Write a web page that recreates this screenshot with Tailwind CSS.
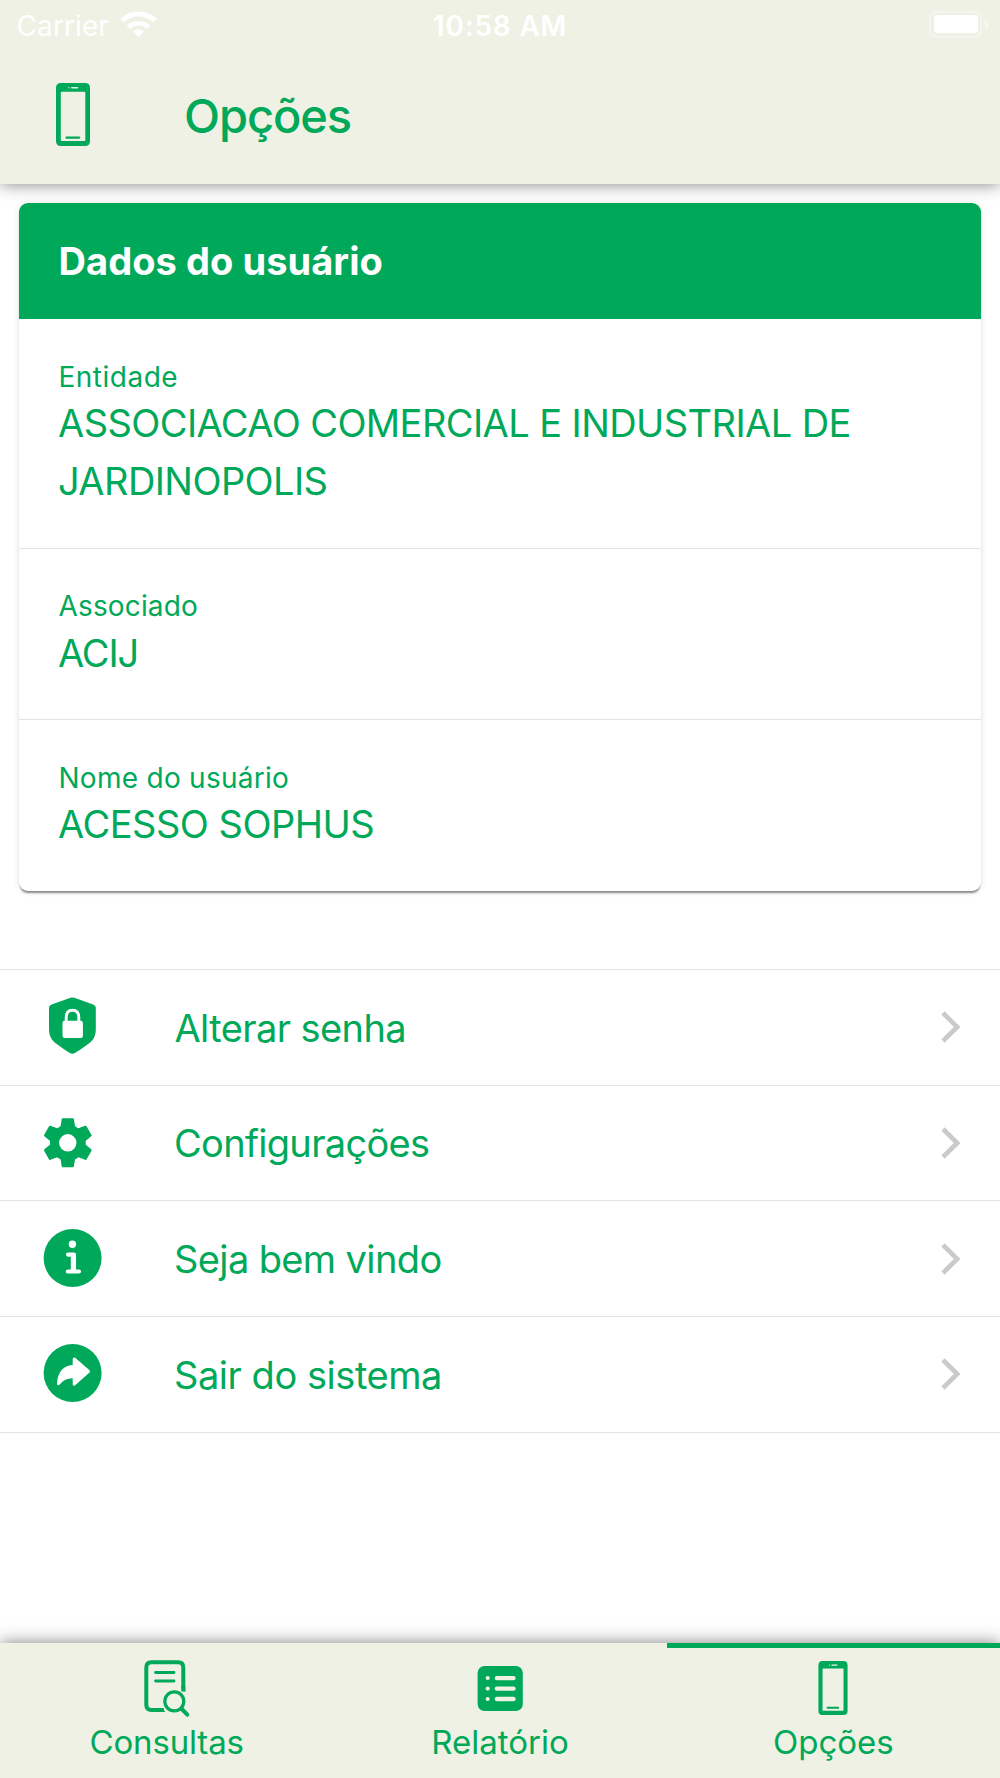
<!DOCTYPE html>
<html lang="pt-BR">
<head>
<meta charset="utf-8">
<title>Opções</title>
<script src="https://cdn.jsdelivr.net/npm/@tailwindcss/browser@4"></script>
</head>
<body class="bg-white font-['Inter',sans-serif] text-[#00a859]">
<svg class="hidden">
  <symbol id="phone" viewBox="0 0 34 63">
    <path fill="currentColor" fill-rule="evenodd" d="M5 0H29Q34 0 34 5V58Q34 63 29 63H5Q0 63 0 58V5Q0 0 5 0ZM5.500 8.700Q4.800 8.700 4.800 9.500V57.200Q4.800 58 5.500 58H28.500Q29.300 58 29.300 57.200V9.500Q29.300 8.700 28.500 8.700Z"/>
    <path stroke="currentColor" stroke-width="2.400" stroke-linecap="round" d="M10.700 54.600H23"/>
    <circle cx="13" cy="4.700" r=".7" fill="#eff1e4"/>
    <path stroke="#eff1e4" stroke-width="1.400" stroke-linecap="round" d="M15.800 4.700H21.500"/>
  </symbol>
  <symbol id="chevron" viewBox="0 0 20 34">
    <path d="M3 3L17.200 17L3 31" fill="none" stroke="#cacaca" stroke-width="4.600"/>
  </symbol>
</svg>
<div class="w-[1000px] h-[1778px] flex flex-col overflow-hidden">
  <header class="h-[183.500px] shrink-0 bg-[#eff1e4] shadow-[0_0_16px_rgba(0,0,0,0.5)] relative z-10">
    <div class="h-[50px] grid grid-cols-3 text-white text-[28px] leading-[52px]">
      <div class="flex pl-[16.500px]">
        <span class="tracking-[0.100px]">Carrier</span>
        <svg class="ml-[9px] mt-[10px]" width="40" height="28" viewBox="118 10 40 28" fill="none" stroke="#fff">
          <path stroke-width="5" d="M122 20.500A24 24 0 0 1 155 20.500"/>
          <path stroke-width="4.600" d="M128.300 27.200A15 15 0 0 1 148.700 27.200"/>
          <path fill="#fff" stroke="none" d="M133 31.400Q138.500 27 144 31.400L138.500 37Z"/>
        </svg>
      </div>
      <div class="text-center font-semibold tracking-[0.800px]">10:58 AM</div>
      <div class="flex justify-end pt-[10px] pr-[9.500px]">
        <svg width="64" height="30" viewBox="926 10 64 30">
          <rect x="929" y="12" width="51" height="25" rx="6" fill="none" stroke="#fff" stroke-opacity=".4" stroke-width="2"/>
          <rect x="933" y="15" width="44" height="18" rx="3.500" fill="#fff"/>
          <path fill="#fff" fill-opacity=".45" d="M984 20Q987.500 21.500 987.500 24.500T984 29Z"/>
        </svg>
      </div>
    </div>
    <div class="flex items-center h-[131px]">
      <svg class="ml-[55.500px] w-[34px] h-[63px] -mt-[3px]"><use href="#phone"/></svg>
      <h1 class="ml-[94.500px] text-[47px] font-medium tracking-[-1.100px] leading-[60px]">Opções</h1>
    </div>
  </header>

  <main class="flex-1 pt-[19.500px]">
    <section class="mx-[19px] h-[688px] rounded-[9px] overflow-hidden shadow-[0_3px_2px_-1px_rgba(0,0,0,0.42),0_1px_6px_rgba(0,0,0,0.12)]">
      <h2 class="h-[116px] bg-[#00a859] text-white text-[38px] font-bold leading-[116px] pl-[39.500px] tracking-[0.070px]">Dados do usuário</h2>
      <div class="h-[229.500px] border-b border-[#e4e4e4] pl-[39px] pt-[41px]">
        <p class="text-[28px] leading-[35px] tracking-[0.500px] pl-[0.500px]">Entidade</p>
        <p class="-mt-px text-[38px] leading-[58px] tracking-[-0.580px]">ASSOCIACAO COMERCIAL E INDUSTRIAL DE<br>JARDINOPOLIS</p>
      </div>
      <div class="h-[171.500px] border-b border-[#e4e4e4] pl-[39px] pt-[40.500px]">
        <p class="text-[28px] leading-[35px] tracking-[0.150px] pl-[0.500px]">Associado</p>
        <p class="-mt-[0.500px] text-[38px] leading-[58px] tracking-[-1.100px]">ACIJ</p>
      </div>
      <div class="h-[171px] pl-[39px] pt-[41px]">
        <p class="text-[28px] leading-[35px] tracking-[0.270px] pl-[0.500px]">Nome do usuário</p>
        <p class="-mt-px text-[38px] leading-[58px] tracking-[-0.500px]">ACESSO SOPHUS</p>
      </div>
    </section>

    <nav class="mt-[77.800px] border-t border-[#e4e4e4] text-[38px]">
      <a class="flex items-center h-[115.750px] border-b border-[#e4e4e4] pl-[43px] pr-[40px]">
        <svg class="w-[60px] h-[60px]" viewBox="0 0 60 60">
          <path fill="#00a859" d="M27.500 .8Q29.400 0 31.300 .8L49.500 7.200Q52.800 8.300 52.800 11V32C52.800 39 50.300 43.300 45.500 46.800Q39 51.800 32 55.900Q29.400 57.500 26.800 55.900Q19.800 51.800 13.500 46.800C8.600 43.300 6 39 6 32V11Q6 8.300 9.300 7.200Z"/>
          <path fill="none" stroke="#fff" stroke-width="2.900" d="M23.200 25V20.500Q23.200 13.200 29.500 13.200T35.800 20.500V25"/>
          <rect x="19.500" y="23.700" width="20.400" height="17.300" rx="2.200" fill="#fff"/>
        </svg>
        <span class="ml-[71.500px] pt-[2px] grow tracking-[-0.600px]">Alterar senha</span>
        <svg class="w-5 h-[34px]"><use href="#chevron"/></svg>
      </a>
      <a class="flex items-center h-[115.750px] border-b border-[#e4e4e4] pl-[43px] pr-[40px]">
        <svg class="w-[60px] h-[60px]" viewBox="0 0 60 60">
          <g transform="translate(24.800 29.800)" fill="#00a859">
            <path id="tooth" d="M-5 -24.500H5Q5.900 -24.500 6.100 -23.500L7.500 -15H-7.500L-6.100 -23.500Q-5.900 -24.500 -5 -24.500Z"/>
            <use href="#tooth" transform="rotate(60)"/><use href="#tooth" transform="rotate(120)"/><use href="#tooth" transform="rotate(180)"/><use href="#tooth" transform="rotate(240)"/><use href="#tooth" transform="rotate(300)"/>
            <circle r="18"/><circle r="8.700" fill="#fff"/>
          </g>
        </svg>
        <span class="ml-[71px] pt-[2px] grow tracking-[-0.700px]">Configurações</span>
        <svg class="w-5 h-[34px]"><use href="#chevron"/></svg>
      </a>
      <a class="flex items-center h-[115.750px] border-b border-[#e4e4e4] pl-[43px] pr-[40px]">
        <svg class="w-[60px] h-[60px]" viewBox="0 0 60 60">
          <g transform="translate(0 .2)">
            <circle cx="29.600" cy="28.800" r="29" fill="#00a859"/>
            <circle cx="29.400" cy="15" r="3.700" fill="#fff"/>
            <path d="M25 25.400H31V42.300M24.800 42.300H36" fill="none" stroke="#fff" stroke-width="4.100" stroke-linecap="round" stroke-linejoin="round"/>
            <path d="M30.400 26V42" stroke="#fff" stroke-width="5.200"/>
          </g>
        </svg>
        <span class="ml-[71px] pt-[2px] grow tracking-[-0.620px]">Seja bem vindo</span>
        <svg class="w-5 h-[34px]"><use href="#chevron"/></svg>
      </a>
      <a class="flex items-center h-[115.750px] border-b border-[#e4e4e4] pl-[43px] pr-[40px]">
        <svg class="w-[60px] h-[60px]" viewBox="0 0 60 60">
          <g transform="translate(0 .2)">
            <circle cx="29.600" cy="28.800" r="29" fill="#00a859"/>
            <path fill="#fff" stroke="#fff" stroke-width="3" stroke-linejoin="round" d="M31.200 14.700L45.500 27.200L31.200 40V32.600C24 32 19 35 15.500 39.500C16 29.500 20 22.500 31.200 22Z"/>
          </g>
        </svg>
        <span class="ml-[71px] pt-[2px] grow tracking-[-0.460px]">Sair do sistema</span>
        <svg class="w-5 h-[34px]"><use href="#chevron"/></svg>
      </a>
    </nav>
  </main>

  <footer class="h-[135.500px] shrink-0 grid grid-cols-3 bg-[#eff1e4] shadow-[0_0_16px_rgba(0,0,0,0.5)] text-[33px] leading-[40px] relative">
    <div class="flex flex-col items-center pt-[13px]">
      <svg width="60" height="64" viewBox="136.700 1656 60 64" fill="none" stroke="#00a859" stroke-linecap="round">
        <path stroke-width="4" stroke-linecap="butt" d="M183 1691.500V1667.500Q183 1662.300 177.800 1662.300H151.200Q146 1662.300 146 1667.500V1704.800Q146 1710 151.200 1710H163.500"/>
        <path stroke="none" fill="#00a859" d="M181 1688L185 1692V1686H181ZM160 1708H162L165 1712H160Z"/>
        <path stroke-width="2.900" d="M155.300 1672.500H173.700M155.300 1681H173.700"/>
        <circle cx="174" cy="1701.300" r="9.500" stroke-width="3.200"/>
        <path stroke-width="4" d="M181.500 1709L187 1714.700"/>
      </svg>
      <span class="tracking-[-0.160px] mt-[2px]">Consultas</span>
    </div>
    <div class="flex flex-col items-center pt-[13px]">
      <svg width="60" height="64" viewBox="470 1656 60 64">
        <rect x="477.600" y="1666" width="45.200" height="45" rx="7" fill="#00a859"/>
        <g fill="#eff1e4">
          <circle cx="487.700" cy="1678" r="2.100"/><circle cx="487.700" cy="1688.600" r="2.100"/><circle cx="487.700" cy="1699" r="2.100"/>
          <rect x="494.700" y="1675.900" width="21" height="4.400" rx="2.200"/><rect x="494.700" y="1686.400" width="21" height="4.400" rx="2.200"/><rect x="494.700" y="1696.800" width="21" height="4.400" rx="2.200"/>
        </g>
      </svg>
      <span class="mt-[2px]">Relatório</span>
    </div>
    <div class="flex flex-col items-center border-t-[5px] border-[#00a859] pt-[8px]">
      <svg class="w-[30px] h-[54px] my-[5px]"><use href="#phone"/></svg>
      <span class="mt-[2px]">Opções</span>
    </div>
  </footer>
</div>
</body>
</html>
